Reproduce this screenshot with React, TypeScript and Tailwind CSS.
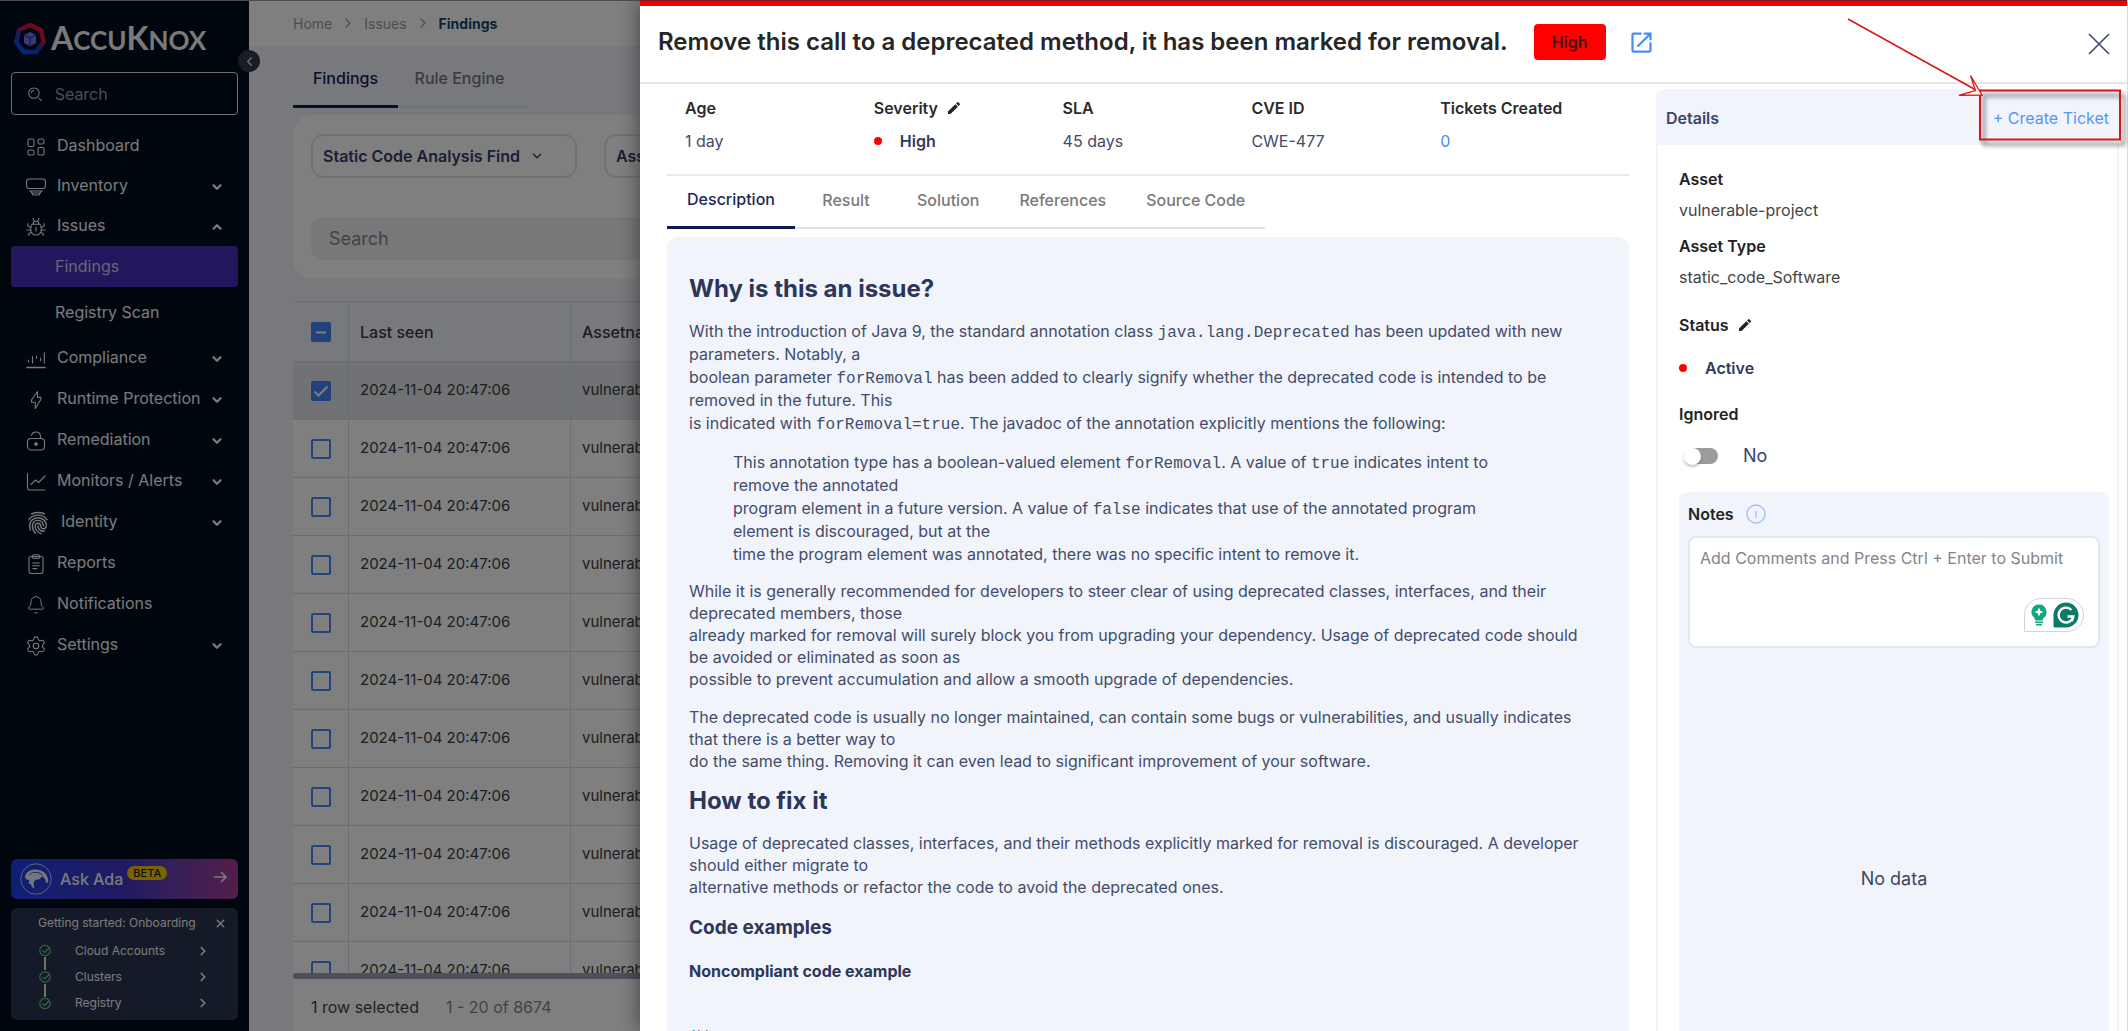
import type { ReactNode } from "react";
import {
  Bell,
  ChevronDown,
  ChevronLeft,
  ChevronRight,
  ChevronUp,
  Settings,
  X,
} from "lucide-react";
import { IoFingerPrint } from "react-icons/io5";
import { MdEdit, MdOpenInNew } from "react-icons/md";

/* ---------- icons ---------- */

function LineIcon({ children }: { children: ReactNode }) {
  return (
    <svg
      viewBox="0 0 20 20"
      className="size-5"
      fill="none"
      stroke="currentColor"
      strokeWidth="1.1"
      strokeLinecap="round"
      strokeLinejoin="round"
      aria-hidden="true"
    >
      {children}
    </svg>
  );
}

const DashboardIcon = () => (
  <LineIcon>
    <rect x="2" y="2" width="6" height="7.5" rx="1.5" />
    <rect x="12" y="2" width="6" height="5" rx="1.5" />
    <rect x="2" y="13" width="6" height="5" rx="1.5" />
    <rect x="12" y="10.5" width="6" height="7.5" rx="1.5" />
  </LineIcon>
);

const InventoryIcon = () => (
  <LineIcon>
    <rect x="0.6" y="2" width="18.8" height="9.5" rx="2.5" />
    <path d="M3.5 14h13M5.5 16h9M5 14l2 4h6l2-4" />
  </LineIcon>
);

const BugIcon = () => (
  <LineIcon>
    <path d="M7 7.2a3 3 0 0 1 6 0M6 7.2h8c1 1.5 1.3 3 1.3 5A5.3 5.3 0 0 1 10 18a5.3 5.3 0 0 1-5.300-5.800c0-2 .3-3.500 1.300-5z" />
    <path d="M8.300 4.300 7 1.500M11.700 4.300 13 1.500M10 10v4M4.900 10.500 1.800 9V6.500M15.100 10.500 18.200 9V6.500M4.700 13H.8M15.300 13h3.900M5.600 15.500l-2.800 1v2M14.400 15.500l2.800 1v2" />
  </LineIcon>
);

const ComplianceIcon = () => (
  <LineIcon>
    <path d="M1 18.500h18" strokeWidth="1.500" />
    <path d="M2.500 11v2M6.500 7.500V14M10.500 7v2.500M14.500 9v2.500M18.300 3.500V14" />
  </LineIcon>
);

const BoltIcon = () => (
  <LineIcon>
    <path d="M11.500 1.500 5.500 10v2.300h3.800V18.500l5.500-9V7.400h-3.300z" />
  </LineIcon>
);

const UnlockIcon = () => (
  <LineIcon>
    <rect x="1.500" y="7.500" width="17" height="11.500" rx="3.500" />
    <path d="M5.500 4C6.300 1.800 8 1 10 1c2.600 0 4.500 1.800 4.500 4.500v2" />
    <circle cx="10" cy="13" r="1.300" fill="currentColor" />
  </LineIcon>
);

const TrendIcon = () => (
  <LineIcon>
    <path d="M1.500 1.500v14a2.500 2.500 0 0 0 2.500 2.500h15M5 12.500l4.500-4.500 3 2.500 6.500-6.500" />
  </LineIcon>
);

const ReportIcon = () => (
  <LineIcon>
    <rect x="3" y="2.500" width="14" height="17" rx="2" />
    <rect x="6.500" y="0.800" width="7" height="3.600" rx="1.500" />
    <path d="M6.800 9h6.500M6.800 11.800h6.500M6.800 14.600h4" />
  </LineIcon>
);

function SearchIcon() {
  return (
    <svg viewBox="0 0 18 18" className="size-[18px]" fill="none" stroke="currentColor" strokeWidth="1.2" strokeLinecap="round" aria-hidden="true">
      <circle cx="8" cy="8" r="6" />
      <path d="M14 14l2.500 2.500M5 7.500A3.200 3.200 0 0 1 7.500 5" />
    </svg>
  );
}

function LogoMark() {
  return (
    <svg viewBox="0 0 34 34" className="size-[34px] shrink-0" aria-hidden="true">
      <defs>
        <linearGradient id="ring" x1="0.85" y1="0.1" x2="0.3" y2="0.95">
          <stop offset="0" stopColor="#e4103c" />
          <stop offset="0.35" stopColor="#b8184e" />
          <stop offset="0.7" stopColor="#1b36d0" />
          <stop offset="1" stopColor="#0a4cf0" />
        </linearGradient>
      </defs>
      <path d="M17 3 28 8.300 30.700 20 23.200 30H10.800L3.300 20 6 8.300z" fill="none" stroke="url(#ring)" strokeWidth="4.600" strokeLinejoin="round" />
      <path d="M17 10l6 3v8l-6 3.500-6-3.500v-8z" fill="#7a70f5" />
      <path d="M11 13l6 3 6-3M17 16v8" fill="none" stroke="#2a2ca8" strokeWidth="1.200" />
    </svg>
  );
}

function AdaAvatar() {
  return (
    <svg viewBox="0 0 32 32" className="size-8" aria-hidden="true">
      <circle cx="16" cy="16" r="15.200" fill="none" stroke="#b9c2f5" strokeWidth="1" />
      <path d="M5 13.500c1-4.500 5.500-7 10.500-7 6.500 0 11.500 3.500 12.700 10 .5 2.500-.7 3.700-2.400 3.300.3-2.800-1-5.300-3.800-6.600-1.300 2.800-4.300 3.800-6.500 3.600-2.200 2-2.300 5-1 8.700-2.300-1-3.500-2.600-3.700-4.800-1 .6-2 .3-2.400-.5.8-1 .9-2 .6-3.200C6.800 17 5 16 5 13.500z" fill="#e9ecff" />
      <path d="M14 9.500c3.500-.5 6.500.3 8.500 3M9.500 12c1.300-1.700 2.500-2.300 4-2.500" fill="none" stroke="#2437b8" strokeWidth="0.900" />
    </svg>
  );
}

/* ---------- sidebar ---------- */

type NavEntry = { label: string; icon: ReactNode; open?: boolean; menu?: boolean; wide?: boolean };

const topNav: NavEntry[] = [
  { label: "Dashboard", icon: <DashboardIcon /> },
  { label: "Inventory", icon: <InventoryIcon />, menu: true },
  { label: "Issues", icon: <BugIcon />, menu: true, open: true },
];

const lowerNav: NavEntry[] = [
  { label: "Compliance", icon: <ComplianceIcon />, menu: true },
  { label: "Runtime Protection", icon: <BoltIcon />, menu: true },
  { label: "Remediation", icon: <UnlockIcon />, menu: true },
  { label: "Monitors / Alerts", icon: <TrendIcon />, menu: true },
  { label: "Identity", icon: <IoFingerPrint size={24} />, menu: true, wide: true },
  { label: "Reports", icon: <ReportIcon /> },
  { label: "Notifications", icon: <Bell size={20} strokeWidth={1.2} /> },
  { label: "Settings", icon: <Settings size={22} strokeWidth={1.2} />, menu: true },
];

function NavRow({ item, className }: { item: NavEntry; className: string }) {
  const Arrow = item.open ? ChevronUp : ChevronDown;
  return (
    <a href="#" className={`flex items-center pr-[14px] pb-px pl-[14px] ${className}`}>
      <span className={`mt-1 flex shrink-0 items-center justify-center ${item.wide ? "w-[26px]" : "w-[22px]"}`}>
        {item.icon}
      </span>
      <span className="ml-[10px] flex-1 whitespace-nowrap">{item.label}</span>
      {item.menu && <Arrow size={14} strokeWidth={4} className="mt-1 shrink-0" />}
    </a>
  );
}

function Sidebar() {
  return (
    <aside className="relative flex w-[249px] shrink-0 flex-col bg-[#000c1d] px-[11px] pt-[20px] pb-[11px] text-[#f4f4f6]">
      <div className="flex h-9 items-center gap-1 pl-[2px]">
        <LogoMark />
        <span className="font-['Lato'] text-[26px] leading-9 font-bold whitespace-nowrap">
          <span className="text-[32px]">A</span>CCU<span className="text-[32px]">K</span>NOX
        </span>
      </div>
      <button
        type="button"
        aria-label="Collapse menu"
        className="absolute top-[49px] -right-[11px] z-10 flex size-[22px] items-center justify-center rounded-full bg-[#35374a] text-[#dfe1e8]"
      >
        <ChevronLeft size={15} strokeWidth={2} />
      </button>
      <label className="mt-[15px] flex h-[43px] items-center gap-3 rounded-[4px] border border-[#dfe3ea] pl-[15px]">
        <SearchIcon />
        <input
          type="text"
          aria-label="Search menu"
          placeholder="Search"
          className="w-full bg-transparent text-[16px] outline-none placeholder:text-[#9a9da6]"
        />
      </label>

      <nav className="mt-[10px] text-[16px]">
        {topNav.map((item) => (
          <NavRow key={item.label} item={item} className="h-10" />
        ))}
        <a href="#" className="mt-px flex h-[41px] items-center rounded-[4px] bg-[#442fb8] pb-px pl-[44px] text-[#cfcbe8]">
          Findings
        </a>
        <a href="#" className="flex h-[50px] items-center pl-[44px]">
          Registry Scan
        </a>
        {lowerNav.map((item) => (
          <NavRow key={item.label} item={item} className="h-[41px]" />
        ))}
      </nav>

      <button
        type="button"
        className="mt-auto flex h-10 items-center rounded-[6px] bg-linear-to-r from-[#1741e8] via-[#4034c4] to-[#a63a96] pr-[11px] pl-[9px]"
      >
        <AdaAvatar />
        <span className="ml-2 text-[16px] font-medium whitespace-nowrap">Ask Ada</span>
        <span className="mb-3 ml-1 rounded-full bg-[#f5c800] px-[6px] text-[11px] leading-[14px] font-medium text-[#1c1c1c]">
          BETA
        </span>
        <svg viewBox="0 0 14 14" className="mb-1 ml-auto size-[14px]" fill="none" stroke="currentColor" strokeWidth="1.600" aria-hidden="true">
          <path d="M1 7h12M8 2l5 5-5 5" />
        </svg>
      </button>

      <section className="mt-[9px] h-28 rounded-[6px] bg-[#2a3550] text-[12px]">
        <div className="flex h-[30px] items-center justify-between pr-[11px] pl-[27px]">
          <h2 className="whitespace-nowrap">Getting started: Onboarding</h2>
          <button type="button" aria-label="Dismiss onboarding">
            <X size={13} strokeWidth={2.5} />
          </button>
        </div>
        <div className="flex items-center pl-7">
          <svg viewBox="0 0 12 66" className="h-[66px] w-3 shrink-0" fill="none" aria-hidden="true">
            <path d="M6 13v13M6 40v13" stroke="#f1f1f1" strokeWidth="1.800" />
            {[6.5, 33, 59.5].map((cy) => (
              <g key={cy} stroke="#5fd07f" strokeWidth="1.200">
                <circle cx="6" cy={cy} r="5.200" />
                <path d={`M3.500 ${cy}l2 2 4.500-4.500`} />
              </g>
            ))}
          </svg>
          <ul className="flex-1 pr-[28px] pl-6">
            {["Cloud Accounts", "Clusters", "Registry"].map((step) => (
              <li key={step}>
                <a href="#" className="flex h-[26px] items-center justify-between">
                  {step}
                  <ChevronRight size={14} strokeWidth={3} />
                </a>
              </li>
            ))}
          </ul>
        </div>
      </section>
    </aside>
  );
}

/* ---------- findings page ---------- */

function CheckBox({ state, label }: { state: "on" | "off" | "mixed"; label: string }) {
  return (
    <label className="mx-auto grid size-5 place-items-center">
      <input
        type="checkbox"
        aria-label={label}
        defaultChecked={state !== "off"}
        className="col-start-1 row-start-1 size-5 appearance-none rounded-[2px] border-2 border-[#4285f4] checked:bg-[#4285f4]"
      />
      {state !== "off" && (
        <svg viewBox="0 0 20 20" className="pointer-events-none col-start-1 row-start-1 size-5" fill="none" stroke="#fff" strokeWidth="2" aria-hidden="true">
          <path d={state === "on" ? "M3.500 10.500l4 4 9-9" : "M5 10.500h10"} />
        </svg>
      )}
    </label>
  );
}

function FindingsPage() {
  const cell = "border-r border-b border-[#d3dcec]";
  return (
    <div className="flex min-w-0 flex-1 flex-col bg-[#eff3fb]">
      <header className="flex h-[45px] shrink-0 items-center gap-2 bg-white pb-px pl-11 text-[14px] text-[#9c9c9c]">
        <a href="#">Home</a>
        <ChevronRight size={16} />
        <a href="#">Issues</a>
        <ChevronRight size={16} />
        <a href="#" className="font-bold text-[#14496b]">
          Findings
        </a>
      </header>
      <div className="flex min-h-0 flex-1 flex-col pl-11">
        <div role="tablist" className="flex text-[16px] font-medium">
          <button type="button" role="tab" aria-selected="true" className="h-[62px] w-[105px] border-b-3 border-[#101c5c] pt-1 text-[#15205c]">
            Findings
          </button>
          <button type="button" role="tab" aria-selected="false" className="h-[62px] w-[131px] border-b-2 border-[#dde2ec] pt-1 pr-2 text-[#777]">
            Rule Engine
          </button>
        </div>
        <section className="mt-[7px] rounded-l-[20px] bg-white py-[19px] pl-[18px]">
          <div className="flex gap-[27px] text-[16px] font-semibold text-[#33406b]">
            <div className="relative">
              <select aria-label="Finding type" className="h-11 w-[266px] appearance-none rounded-xl border-2 border-[#dfe5f1] bg-transparent px-[10px]">
                <option>Static Code Analysis Find</option>
              </select>
              <ChevronDown size={14} strokeWidth={2.5} className="pointer-events-none absolute top-[15px] left-[219px]" />
            </div>
            <select aria-label="Asset" className="h-11 w-[266px] appearance-none rounded-xl border-2 border-[#dfe5f1] bg-transparent px-[10px]">
              <option>Asset</option>
            </select>
          </div>
          <input
            type="search"
            aria-label="Search findings"
            placeholder="Search"
            className="mt-[39px] block h-[43px] w-full rounded-l-xl bg-[#f0f1f4] px-[18px] text-[18px] placeholder:text-[#858585]"
          />
        </section>
        <div className="mt-[22px] min-h-0 flex-1 overflow-hidden">
          <table className="w-full table-fixed border-separate border-spacing-0 border-t border-[#d3dcec] text-left text-[15px] text-[#3c3c3c]">
            <thead>
              <tr className="h-[60px]">
                <th className={`${cell} w-14`}>
                  <CheckBox state="mixed" label="Select all rows" />
                </th>
                <th className={`${cell} w-[222px] pl-[11px] text-[16px] font-medium`}>Last seen</th>
                <th className={`${cell} pl-[11px] text-[16px] font-medium`}>Assetname</th>
              </tr>
            </thead>
            <tbody>
              {Array.from({ length: 11 }, (_, i) => (
                <tr key={i} className={i === 0 ? "h-[58px] bg-[#e2e5ea]" : "h-[58px] bg-white"}>
                  <td className={cell}>
                    <CheckBox state={i === 0 ? "on" : "off"} label={`Select row ${i + 1}`} />
                  </td>
                  <td className={`${cell} pl-[11px]`}>2024-11-04 20:47:06</td>
                  <td className={`${cell} pl-[11px]`}>vulnerable-project</td>
                </tr>
              ))}
            </tbody>
          </table>
        </div>
        <div className="h-[6px] shrink-0 rounded-l-full bg-[#9aa3b4]" />
        <footer className="flex h-[52px] shrink-0 items-center gap-[27px] bg-white pt-1 pl-[18px] text-[16px] text-[#444]">
          <span>1 row selected</span>
          <span className="text-[#858585]">1 - 20 of 8674</span>
        </footer>
      </div>
    </div>
  );
}

/* ---------- detail drawer ---------- */

function Lines({ lines }: { lines: ReactNode[] }) {
  return (
    <>
      {lines.map((line, i) => (
        <span key={i} className="block whitespace-nowrap">
          {line}
        </span>
      ))}
    </>
  );
}

function Code({ children }: { children: ReactNode }) {
  return <code className="font-['Liberation_Mono',monospace] text-[16px] leading-4">{children}</code>;
}

const heading = "text-[24px] leading-[30px] font-bold";

function Description() {
  return (
    <article className="min-h-0 flex-1 overflow-hidden rounded-t-xl bg-[#f1f4fa] px-[22px] pt-[37px] text-[16px] leading-[22px] text-[#434c6b] [&_h2]:text-[#2c3659] [&_h3]:text-[#2c3659] [&_h4]:text-[#2c3659]">
      <h2 className={heading}>Why is this an issue?</h2>
      <p className="mt-4 leading-[23px]">
        <Lines
          lines={[
            <>With the introduction of Java 9, the standard annotation class <Code>java.lang.Deprecated</Code> has been updated with new</>,
            "parameters. Notably, a",
            <>boolean parameter <Code>forRemoval</Code> has been added to clearly signify whether the deprecated code is intended to be</>,
            "removed in the future. This",
            <>is indicated with <Code>forRemoval=true</Code>. The javadoc of the annotation explicitly mentions the following:</>,
          ]}
        />
      </p>
      <blockquote className="mt-4 pl-11 leading-[23px]">
        <Lines
          lines={[
            <>This annotation type has a boolean-valued element <Code>forRemoval</Code>. A value of <Code>true</Code> indicates intent to</>,
            "remove the annotated",
            <>program element in a future version. A value of <Code>false</Code> indicates that use of the annotated program</>,
            "element is discouraged, but at the",
            "time the program element was annotated, there was no specific intent to remove it.",
          ]}
        />
      </blockquote>
      <p className="mt-[14px]">
        <Lines
          lines={[
            "While it is generally recommended for developers to steer clear of using deprecated classes, interfaces, and their",
            "deprecated members, those",
            "already marked for removal will surely block you from upgrading your dependency. Usage of deprecated code should",
            "be avoided or eliminated as soon as",
            "possible to prevent accumulation and allow a smooth upgrade of dependencies.",
          ]}
        />
      </p>
      <p className="mt-4">
        <Lines
          lines={[
            "The deprecated code is usually no longer maintained, can contain some bugs or vulnerabilities, and usually indicates",
            "that there is a better way to",
            "do the same thing. Removing it can even lead to significant improvement of your software.",
          ]}
        />
      </p>
      <h2 className={`mt-[14px] ${heading}`}>How to fix it</h2>
      <p className="mt-4">
        <Lines
          lines={[
            "Usage of deprecated classes, interfaces, and their methods explicitly marked for removal is discouraged. A developer",
            "should either migrate to",
            "alternative methods or refactor the code to avoid the deprecated ones.",
          ]}
        />
      </p>
      <h3 className="mt-[18px] text-[19px] leading-6 font-bold">Code examples</h3>
      <h4 className="mt-5 text-[16px] leading-[22px] font-bold">Noncompliant code example</h4>
      <pre className="mt-[43px] font-['Inter',sans-serif]">/**</pre>
    </article>
  );
}

function Meta({ label, edit, children }: { label: string; edit?: boolean; children: ReactNode }) {
  return (
    <div>
      <dt className="flex items-center gap-2 font-semibold text-[#2b2b2b]">
        {label}
        {edit && <EditButton label={`Edit ${label}`} />}
      </dt>
      <dd className="mt-[9px]">{children}</dd>
    </div>
  );
}

function EditButton({ label }: { label: string }) {
  return (
    <button type="button" aria-label={label} className="text-[#222]">
      <MdEdit size={16} />
    </button>
  );
}

function Dot({ children }: { children: ReactNode }) {
  return (
    <span className="flex items-center gap-[18px] font-semibold text-[#2f3a62]">
      <span className="size-2 rounded-full bg-[#ff0000]" />
      {children}
    </span>
  );
}

const tabs = ["Description", "Result", "Solution", "References", "Source Code"];

function DetailsPanel() {
  return (
    <section className="flex w-[463px] shrink-0 flex-col rounded-t-lg border-x-2 border-[#f1f4fa]">
      <header className="flex h-14 shrink-0 items-center justify-between rounded-t-lg bg-[#f1f4fa] pt-px pr-2 pl-2">
        <h2 className="font-semibold text-[#3a4468]">Details</h2>
        <button type="button" className="text-[16px] text-[#5796f5]">
          + Create Ticket
        </button>
      </header>
      <div className="flex min-h-0 flex-1 flex-col pt-[22px] pr-[8px] pl-[21px]">
        <dl className="leading-6 text-[#444] [&>dt]:font-semibold [&>dt]:text-[#222]">
          <dt>Asset</dt>
          <dd className="mt-[7px]">vulnerable-project</dd>
          <dt className="mt-3">Asset Type</dt>
          <dd className="mt-[7px]">static_code_Software</dd>
          <dt className="mt-6 flex items-center gap-2">
            Status <EditButton label="Edit status" />
          </dt>
          <dd className="mt-[19px]">
            <Dot>Active</Dot>
          </dd>
          <dt className="mt-[22px]">Ignored</dt>
          <dd className="mt-[18px]">
            <label className="flex items-center text-[18px] text-[#3a4468]">
              <input type="checkbox" role="switch" aria-label="Ignored" className="peer sr-only" />
              <span className="ml-[5px] flex h-4 w-[34px] items-center rounded-full bg-linear-to-r from-transparent from-25% to-[#9b9b9b] to-25%">
                <span className="size-[17px] rounded-full bg-white shadow-[0_2px_3px_rgba(0,0,0,0.25)]" />
              </span>
              <span className="ml-[25px]">No</span>
            </label>
          </dd>
        </dl>
        <section className="mt-6 flex min-h-0 flex-1 flex-col rounded-t-lg bg-[#f1f4fa] px-[9px]">
          <h3 className="flex h-11 items-center gap-3 font-semibold text-[#222]">
            <label htmlFor="notes">Notes</label>
            <svg viewBox="0 0 20 20" className="size-5" fill="none" stroke="#9cc0f8" strokeWidth="1.300" aria-hidden="true">
              <circle cx="10" cy="10" r="9" />
              <path d="M10 7v7" />
            </svg>
          </h3>
          <div className="relative">
            <textarea
              id="notes"
              placeholder="Add Comments and Press Ctrl + Enter to Submit"
              className="block h-[112px] w-full resize-none rounded-lg border-2 border-[#e3e6ed] bg-white px-[10px] pt-2 text-[16px] outline-none placeholder:text-[#858585]"
            />
            <div className="absolute right-[16px] bottom-4 flex h-[34px] w-[60px] items-center justify-center gap-1 rounded-full rounded-bl-none border border-[#cfd3dc] bg-white">
              <svg viewBox="0 0 20 24" className="h-6 w-5" aria-hidden="true">
                <path d="M10 1.500a7.500 7.500 0 0 0-4.500 13.500l1 2.500h7l1-2.500A7.500 7.500 0 0 0 10 1.500z" fill="#11a683" />
                <path d="M10 4.500l1.300 3.200L14.500 9l-3.200 1.300L10 13.500l-1.300-3.200L5.500 9l3.200-1.300z" fill="#fff" />
                <path d="M6 19.200h8M7 21.800h6" stroke="#11a683" strokeWidth="1.600" />
              </svg>
              <svg viewBox="0 0 26 26" className="size-[26px]" fill="none" aria-hidden="true">
                <path d="M13 .5a12.500 12.500 0 0 1 0 25H2.500C1 25.500.5 25 .5 23.500V13A12.500 12.500 0 0 1 13 .5z" fill="#0b7a66" />
                <path d="M18.500 8A7.400 7.400 0 1 0 20.300 14.500H14.500M20.300 14.500l-1.500 4.500" stroke="#fff" strokeWidth="2.400" />
              </svg>
            </div>
          </div>
          <p className="flex flex-1 items-center justify-center pt-[77px] text-[18px] text-[#3d4663]">No data</p>
        </section>
      </div>
    </section>
  );
}

function Callout() {
  return (
    <svg viewBox="0 0 288 160" className="pointer-events-none absolute top-0 right-0 h-40 w-72" fill="none" aria-hidden="true">
      <g className="drop-shadow-[4px_5px_2px_rgba(0,0,0,0.6)]">
        <rect x="140" y="90.500" width="140" height="49" stroke="#dc1414" strokeWidth="2" />
      </g>
      <path d="M8 19l128 71" stroke="#dc1414" strokeWidth="1.500" />
      <path d="M130.500 75.500 142 95l-23 .3L135.500 90.500z" stroke="#dc1414" strokeWidth="1.300" fill="#fff" />
    </svg>
  );
}

function Drawer() {
  return (
    <div role="dialog" aria-label="Finding details" className="flex h-full min-w-0 flex-1 flex-col border-r border-[#d9d9de] bg-white shadow-[-4px_0_16px_rgba(0,0,0,0.35)]">
      <div className="h-[6px] shrink-0 border-t border-[#7d1a1a] bg-[#ee0000]" />
      <header className="flex h-[78px] shrink-0 items-center border-b-2 border-[#e4e5e8] pr-[16px] pb-1 pl-[18px]">
        <h1 className="text-[24px] font-semibold whitespace-nowrap text-[#262626]">
          Remove this call to a deprecated method, it has been marked for removal.
        </h1>
        <span className="ml-[26px] flex h-9 w-[72px] shrink-0 items-center justify-center rounded-[4px] bg-[#ff0000] text-[16px] font-semibold text-[#4a1010]">
          High
        </span>
        <a href="#" aria-label="Open in new tab" className="ml-[22px] text-[#4a8df5]">
          <MdOpenInNew size={27} />
        </a>
        <button type="button" aria-label="Close" className="mt-1 ml-auto text-[#454e70]">
          <svg viewBox="0 0 24 24" className="size-6" stroke="currentColor" strokeWidth="1.700" aria-hidden="true">
            <path d="M2 2l20 20M22 2L2 22" />
          </svg>
        </button>
      </header>
      <div className="flex min-h-0 flex-1 gap-[27px] pr-2 pl-[27px]">
        <div className="flex min-w-0 flex-1 flex-col">
          <dl className="grid grid-cols-5 border-b-2 border-[#ebebed] pt-3 pb-[21px] pl-[18px] text-[16px] leading-6 text-[#434c6b]">
            <Meta label="Age">1 day</Meta>
            <Meta label="Severity" edit>
              <Dot>High</Dot>
            </Meta>
            <Meta label="SLA">45 days</Meta>
            <Meta label="CVE ID">CWE-477</Meta>
            <Meta label="Tickets Created">
              <a href="#" className="text-[#4a8df5]">
                0
              </a>
            </Meta>
          </dl>
          <div role="tablist" className="flex h-[53px] shrink-0 self-start text-[16px] font-medium">
            {tabs.map((tab, i) => (
              <button
                key={tab}
                type="button"
                role="tab"
                aria-selected={i === 0}
                className={
                  i === 0
                    ? "w-32 border-b-3 border-[#0f1b50] pb-1 text-[#1c2756]"
                    : "min-w-[102px] border-b-2 border-[#e0e3ea] px-[20px] pb-1 text-[#7a7a7a]"
                }
              >
                {tab}
              </button>
            ))}
          </div>
          <div className="mt-2 flex min-h-0 flex-1 flex-col">
            <Description />
          </div>
        </div>
        <div className="mt-[5px] flex">
          <DetailsPanel />
        </div>
      </div>
      <Callout />
    </div>
  );
}

export default function App() {
  return (
    <div className="relative h-screen overflow-hidden font-['Inter',sans-serif]">
      <div className="flex h-full border-t border-[#9a9a9a]">
        <Sidebar />
        <FindingsPage />
      </div>
      <div className="absolute inset-0 z-20 flex bg-black/50">
        <div className="w-[640px] shrink-0" />
        <Drawer />
      </div>
    </div>
  );
}
